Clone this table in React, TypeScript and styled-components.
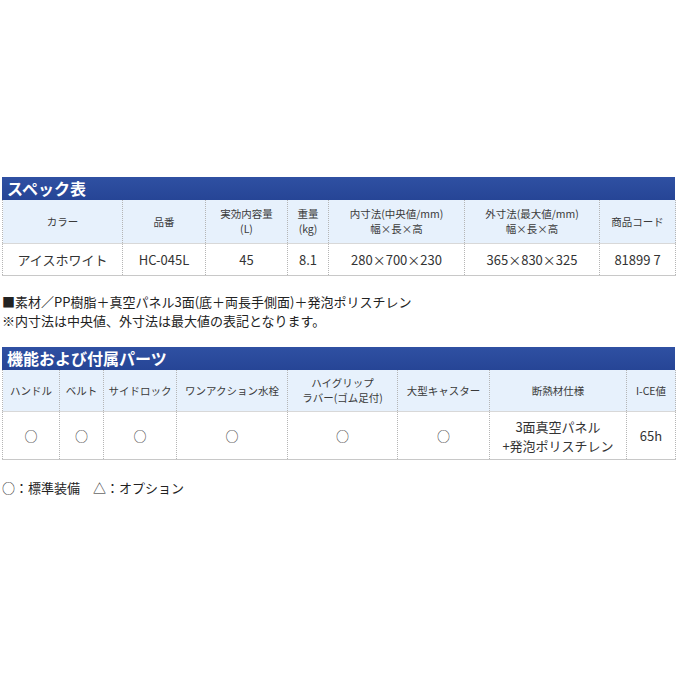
import React from 'react';
import styled, { createGlobalStyle } from 'styled-components';

const GlobalStyle = createGlobalStyle`
    html, body {
        margin: 0;
        padding: 0;
        background: #ffffff;
    }
    body {
        font-family: "Noto Sans CJK JP", "Liberation Sans", sans-serif;
        color: #333333;
    }
`;

const Page = styled.div`
    width: 680px;
    height: 680px;
    padding: 177px 5px 0 2px;
    box-sizing: border-box;
`;

const SectionBar = styled.div`
    height: 23px;
    background: linear-gradient(#2f50a2, #264596);
    color: #ffffff;
    font-size: 16px;
    font-weight: 700;
    line-height: 23px;
    padding-left: 5px;
`;

const Table = styled.table`
    width: 100%;
    border-collapse: collapse;
    table-layout: fixed;
    border-bottom: 1px solid #c8c8c8;
`;

const HeadRow = styled.tr<{ $h: number }>`
    height: ${p => p.$h}px;
    background: #e7f1fc;
`;

const BodyRow = styled.tr<{ $h: number }>`
    height: ${p => p.$h}px;
    background: #ffffff;
    border-top: 1px solid #d8d8d8;
`;

const HeadCell = styled.td`
    border-left: 1px dotted #b5b5b5;
    border-right: 1px dotted #b5b5b5;
    text-align: center;
    vertical-align: middle;
    font-size: 10.5px;
    line-height: 15.5px;
    color: #3a3a3a;
    padding: 0;
`;

const Cell = styled.td`
    border-left: 1px dotted #b5b5b5;
    border-right: 1px dotted #b5b5b5;
    text-align: center;
    vertical-align: middle;
    font-size: 13px;
    line-height: 19px;
    color: #333333;
    padding: 0;
`;

const Notes = styled.div`
    margin: 16px 0 17px;
    font-size: 13px;
    line-height: 19px;
    color: #222222;
`;

const Legend = styled.div`
    margin-top: 18px;
    font-size: 13px;
    line-height: 19px;
    color: #222222;
`;

const specCols = [120, 83, 82, 41, 136, 135, 76];
const partCols = [57, 44, 73, 111, 110, 92, 137, 49];

const specHead = [
    'カラー',
    '品番',
    '実効内容量\n(L)',
    '重量\n(kg)',
    '内寸法(中央値/mm)\n幅×長×高',
    '外寸法(最大値/mm)\n幅×長×高',
    '商品コード',
];
const specRow = ['アイスホワイト', 'HC-045L', '45', '8.1', '280×700×230', '365×830×325', '81899 7'];

const partHead = [
    'ハンドル',
    'ベルト',
    'サイドロック',
    'ワンアクション水栓',
    'ハイグリップ\nラバー(ゴム足付)',
    '大型キャスター',
    '断熱材仕様',
    'I-CE値',
];
const partRow = ['○', '○', '○', '○', '○', '○', '3面真空パネル\n+発泡ポリスチレン', '65h'];

const lines = (s: string) =>
    s.split('\n').map((l, i) => (
        <React.Fragment key={i}>
            {i > 0 && <br />}
            {l}
        </React.Fragment>
    ));

const App = () => {
    return (
        <Page>
            <GlobalStyle />
            <SectionBar>スペック表</SectionBar>
            <Table>
                <colgroup>
                    {specCols.map((w, i) => <col key={i} style={{ width: w }} />)}
                </colgroup>
                <tbody>
                    <HeadRow $h={43}>
                        {specHead.map((t, i) => <HeadCell key={i}>{lines(t)}</HeadCell>)}
                    </HeadRow>
                    <BodyRow $h={32}>
                        {specRow.map((t, i) => <Cell key={i}>{t}</Cell>)}
                    </BodyRow>
                </tbody>
            </Table>

            <Notes>
                ■素材／PP樹脂＋真空パネル3面(底＋両長手側面)＋発泡ポリスチレン<br />
                ※内寸法は中央値、外寸法は最大値の表記となります。
            </Notes>

            <SectionBar>機能および付属パーツ</SectionBar>
            <Table>
                <colgroup>
                    {partCols.map((w, i) => <col key={i} style={{ width: w }} />)}
                </colgroup>
                <tbody>
                    <HeadRow $h={42}>
                        {partHead.map((t, i) => <HeadCell key={i}>{lines(t)}</HeadCell>)}
                    </HeadRow>
                    <BodyRow $h={48}>
                        {partRow.map((t, i) => <Cell key={i}>{lines(t)}</Cell>)}
                    </BodyRow>
                </tbody>
            </Table>

            <Legend>○：標準装備　△：オプション</Legend>
        </Page>
    );
};

export default App;
